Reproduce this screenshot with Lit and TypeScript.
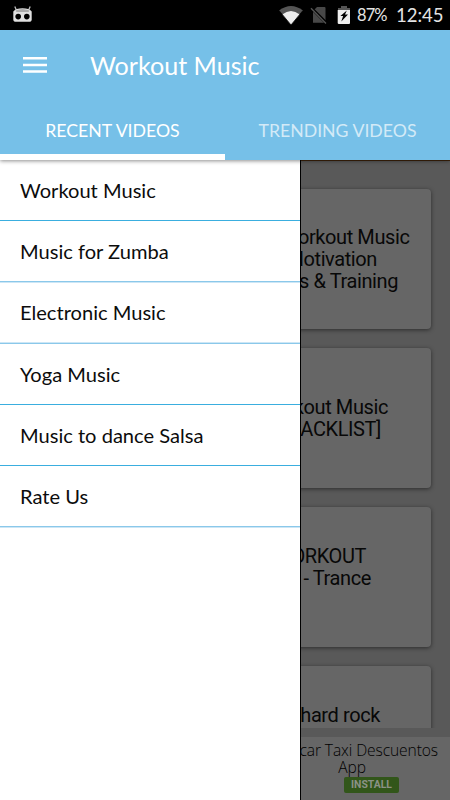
import { LitElement, html, css } from "lit";
import { customElement } from "lit/decorators.js";

interface MenuItem { label: string; edge: string; }
interface CardLine { text: string; inset: number; }

const MENU: MenuItem[] = [
  { label: "Workout Music", edge: "crisp" },
  { label: "Music for Zumba", edge: "below" },
  { label: "Electronic Music", edge: "above" },
  { label: "Yoga Music", edge: "crisp" },
  { label: "Music to dance Salsa", edge: "crisp" },
  { label: "Rate Us", edge: "below" },
];

const CARDS: CardLine[][] = [
  [{ text: "Workout Music", inset: 21.5 }, { text: "Motivation", inset: 54 }, { text: "s & Training", inset: 33 }],
  [{ text: "Workout Music", inset: 43 }, { text: "[TRACKLIST]", inset: 50 }],
  [{ text: "WORKOUT", inset: 65 }, { text: "- Trance", inset: 60 }],
  [{ text: "hard rock", inset: 51 }],
];

@customElement("status-bar")
export class StatusBar extends LitElement {
  static styles = css`
    :host { display: flex; height: 30px; background: #000; color: #e4e4e4; font-family: Lato, sans-serif; align-items: center; box-sizing: border-box; padding: 0 11px 0 12px; }
    .gap { flex: 1; }
    svg { display: block; flex: none; }
    .wifi { margin-right: 6px; }
    .sim { margin-right: 9px; }
    .battery { margin-right: 6px; }
    .pct { font-size: 16.5px; line-height: 30px; width: 39px; white-space: nowrap; letter-spacing: -.9px; }
    .time { font-size: 18.5px; line-height: 32px; width: 43px; white-space: nowrap; }
  `;
  render() {
    return html`
      <svg width="22" height="30" viewBox="0 0 22 30">
        <path d="M2.8 6.5 4.3 10M18.2 6.5 16.7 10" stroke="#bbb" stroke-width="1.3"/>
        <path d="M1.3 11.5Q4 8.3 10.5 8.3T19.7 11.5V19.5Q19.7 21.8 17 21.8H4Q1.3 21.8 1.3 19.5Z" fill="#e0e0e0"/>
        <path d="M3.5 10.5Q10.5 7.5 17.5 10.5L16.5 12H4.5Z" fill="#aaa"/>
        <circle cx="6.2" cy="16.6" r="2.8" fill="#000"/><circle cx="14.8" cy="16.6" r="2.8" fill="#000"/>
      </svg>
      <span class="gap"></span>
      <svg class="wifi" width="26" height="30" viewBox="0 0 26 30">
        <path d="M1 10.5Q13 1.5 25 10.5L13 25Z" fill="#555"/>
        <path d="M4.2 14.5Q13 7.5 21.8 14.5L13 25Z" fill="#eee"/>
        <path d="M1 10.5 13 25 25 10.5" fill="none" stroke="#000" stroke-width=".8"/>
      </svg>
      <svg class="sim" width="18" height="30" viewBox="0 0 18 30">
        <path d="M7 7H14.5Q15.5 7 15.5 8V22.8H3V11Z" fill="#484848"/>
        <path d="M1 7.7 17 23.7" stroke="#000" stroke-width="3"/><path d="M1 8.2 16 23.5" stroke="#555" stroke-width="1.3"/>
      </svg>
      <svg class="battery" width="14" height="30" viewBox="0 0 14 30">
        <path d="M4 6H10V8H13V10H1V8H4Z" fill="#555"/>
        <path d="M.7 10H13V23Q13 24 12 24H2Q.7 24 .7 23Z" fill="#eee"/>
        <path d="M9.8 10.5 3.4 16H6.1L4.3 21.5 11 14.6H8Z" fill="#000"/>
      </svg>
      <span class="pct">87%</span>
      <span class="time">12:45</span>
    `;
  }
}

@customElement("app-header")
export class AppHeader extends LitElement {
  static styles = css`
    :host { display: flex; flex-direction: column; height: 130px; background: #76c0e8; color: #fff; font-family: Lato, sans-serif; box-shadow: 0 1px 4px rgba(0,0,0,.45); position: relative; z-index: 3; }
    .bar { display: flex; height: 70px; align-items: center; padding-left: 23px; }
    .icon { display: block; width: 24px; height: 18px; }
    .title { margin-left: 43px; font-size: 25.1px; line-height: 70px; white-space: nowrap; }
    .tabs { display: grid; grid-template-columns: 1fr 1fr; height: 60px; }
    .tab { box-sizing: border-box; height: 60px; line-height: 62px; text-align: center; font-size: 17.7px; border-bottom: 0 solid #fff; white-space: nowrap; }
    .active { border-bottom-width: 6px; }
    .idle { color: #d3eaf7; }
  `;
  render() {
    return html`
      <div class="bar">
        <svg class="icon" viewBox="0 0 24 18"><path d="M0 2.2H24M0 8.9H24M0 15.6H24" stroke="#fff" stroke-width="2.5"/></svg>
        <span class="title">Workout Music</span>
      </div>
      <div class="tabs">
        <span class="tab active">RECENT VIDEOS</span>
        <span class="tab idle">TRENDING VIDEOS</span>
      </div>
    `;
  }
}

@customElement("nav-drawer")
export class NavDrawer extends LitElement {
  static styles = css`
    :host { display: block; box-sizing: border-box; width: 301px; height: 640px; background: #fff; border-right: 1px solid #000; font-family: Lato, sans-serif; color: #0c0c0c; }
    .item { box-sizing: border-box; height: 61px; padding: 17px 0 0 20px; font-size: 20.1px; line-height: 26px; white-space: nowrap; border-bottom: 1px solid #3aaedf; }
    .below { border-bottom-color: #8ac8ea; box-shadow: 0 1px #cde6f5; }
    .above { height: 62px; border-bottom-color: #8ac8ea; box-shadow: inset 0 -1px #cde6f5; }
  `;
  render() {
    return html`${MENU.map((m) => html`<div class="item ${m.edge}">${m.label}</div>`)}`;
  }
}

@customElement("video-list")
export class VideoList extends LitElement {
  static styles = css`
    :host { display: flex; flex-direction: column; box-sizing: border-box; height: 568px; overflow: hidden; background: #595959; border-top: 1px solid #40240a; padding: 28px 19px 0; gap: 19px; }
    .card { flex: none; box-sizing: border-box; height: 140px; border-radius: 4px; background: #666; box-shadow: 0 1px 4px rgba(0,0,0,.5); display: flex; flex-direction: column; justify-content: center; align-items: flex-end; color: #080808; font: 20px/22px Roboto, sans-serif; letter-spacing: -.4px; }
    .line { white-space: nowrap; }
    .raised { padding-bottom: 20px; }
    .solo { padding-bottom: 42px; }
  `;
  render() {
    return html`${CARDS.map((lines, i) => html`
      <div class="card ${i === 2 ? "raised" : ""} ${i === 3 ? "solo" : ""}">
        ${lines.map((l) => html`<span class="line" style="margin-right:${l.inset}px">${l.text}</span>`)}
      </div>`)}`;
  }
}

@customElement("ad-banner")
export class AdBanner extends LitElement {
  static styles = css`
    :host { display: flex; flex-direction: column; box-sizing: border-box; height: 72px; border-top: 9px solid #595959; background: #666; align-items: flex-end; color: #000; font-family: "Open Sans", sans-serif; padding-top: 5px; }
    .copy { font-size: 15.6px; font-weight: 350; line-height: 17px; white-space: nowrap; margin-right: 12px; letter-spacing: -.1px; }
    .second { margin-right: 84px; }
    .cta { margin: 1px 51px 0 0; width: 55px; height: 16px; border-radius: 2px; background: #32561a; color: #8b9286; font: 700 10.4px/16px Roboto, sans-serif; text-align: center; }
  `;
  render() {
    return html`
      <span class="copy">car Taxi Descuentos</span>
      <span class="copy second">App</span>
      <span class="cta">INSTALL</span>
    `;
  }
}

@customElement("app-root")
export class AppRoot extends LitElement {
  static styles = css`
    :host { display: block; width: 450px; height: 800px; overflow: hidden; }
    .body { position: relative; height: 640px; }
    .drawer { position: absolute; left: 0; top: 0; z-index: 2; }
  `;
  render() {
    return html`
      <status-bar></status-bar>
      <app-header></app-header>
      <div class="body">
        <video-list></video-list>
        <ad-banner></ad-banner>
        <nav-drawer class="drawer"></nav-drawer>
      </div>
    `;
  }
}
